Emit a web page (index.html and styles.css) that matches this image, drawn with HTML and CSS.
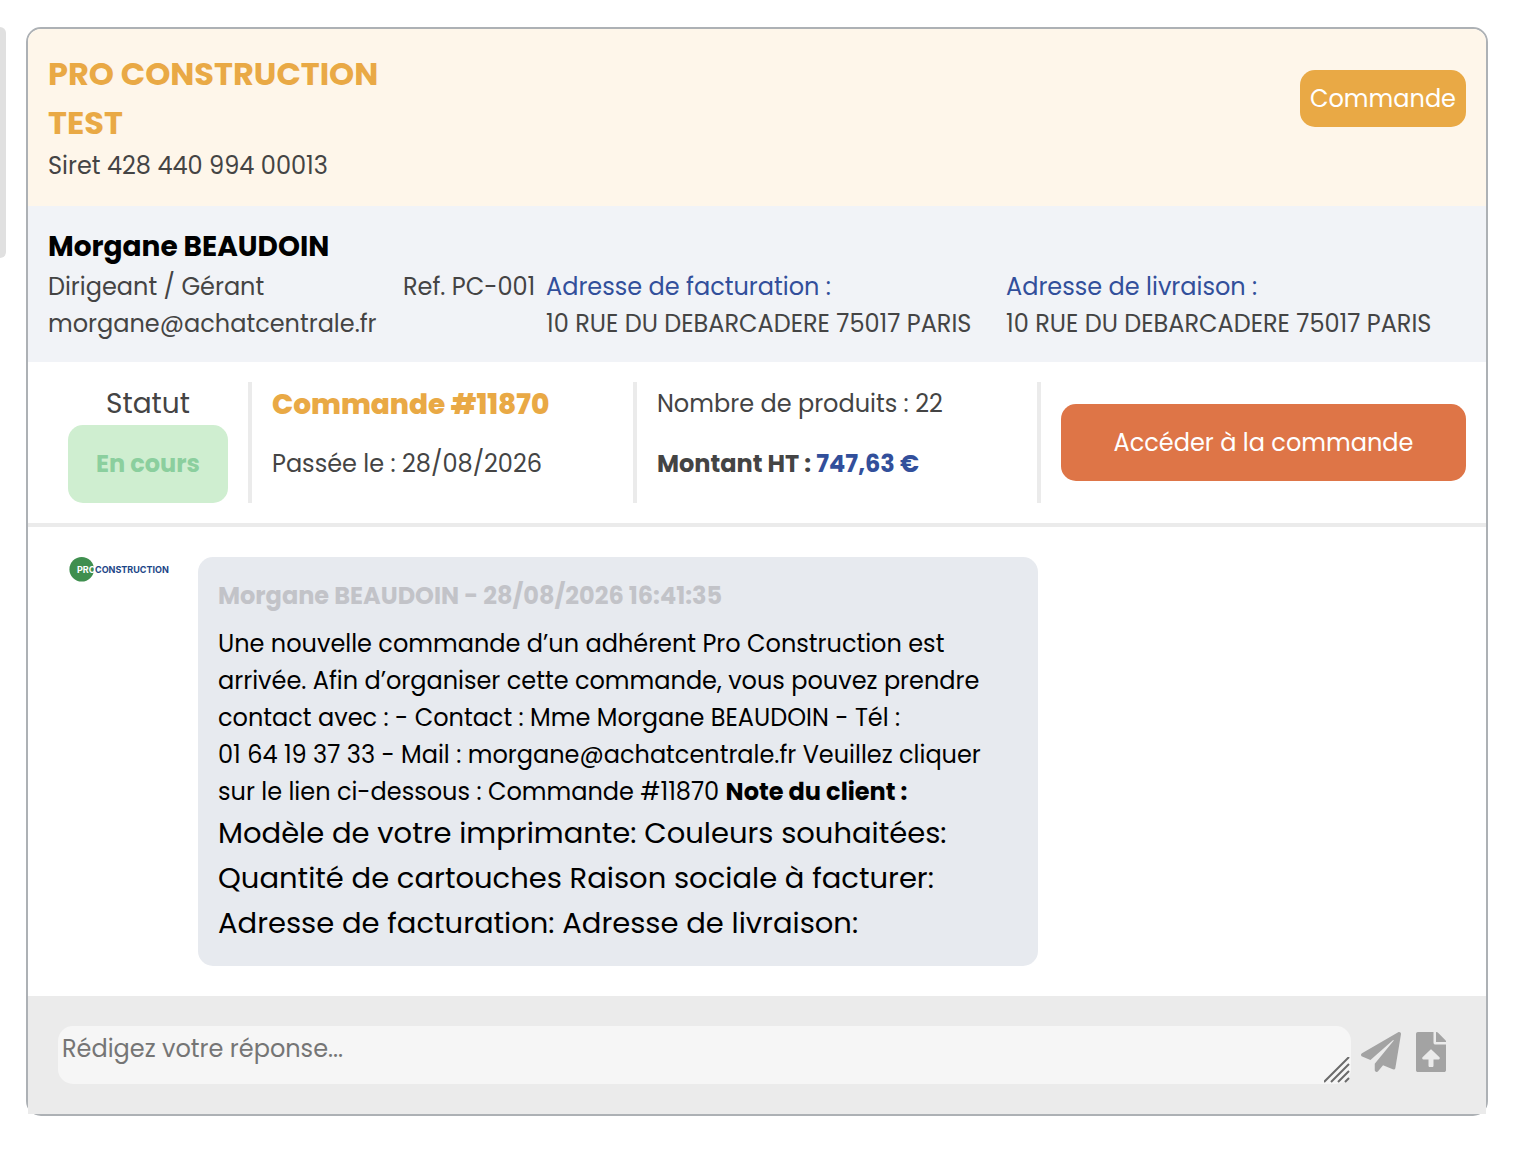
FILE: index.html
```
<!DOCTYPE html>
<html lang="fr">
<head>
  <meta charset="UTF-8">
  <meta name="viewport" content="width=device-width, initial-scale=1.0">
  <title>Commande #11870</title>
  <link rel="stylesheet" href="styles.css">
</head>
<body>

<aside class="sidebar"></aside>

<main class="conversation">

  <!-- Société -->
  <header class="company">
    <div>
      <h1>PRO CONSTRUCTION<br>TEST</h1>
      <p>Siret 428 440 994 00013</p>
    </div>
    <span class="badge">Commande</span>
  </header>

  <!-- Contact et adresses -->
  <section class="contact">
    <h2>Morgane BEAUDOIN</h2>
    <div class="contact-grid">
      <p>Dirigeant / Gérant<br>morgane@achatcentrale.fr</p>
      <p>Ref. PC-001</p>
      <p><span class="label">Adresse de facturation :</span><br>10 RUE DU DEBARCADERE 75017 PARIS</p>
      <p><span class="label">Adresse de livraison :</span><br>10 RUE DU DEBARCADERE 75017 PARIS</p>
    </div>
  </section>

  <!-- Résumé de la commande -->
  <section class="order">
    <div class="order-status">
      <p class="status-title">Statut</p>
      <p class="status">En cours</p>
    </div>
    <div class="order-cell">
      <h2 class="order-number">Commande #11870</h2>
      <p>Passée le : 28/08/2026</p>
    </div>
    <div class="order-cell">
      <p>Nombre de produits : 22</p>
      <p class="amount">Montant HT : <span>747,63 €</span></p>
    </div>
    <div class="order-cell order-action">
      <a href="#" class="order-btn">Accéder à la commande</a>
    </div>
  </section>

  <!-- Messages -->
  <section class="messages">
    <svg class="logo" viewBox="0 0 100 26" role="img" aria-label="Pro Construction">
      <circle cx="13.700" cy="12.200" r="12.300" fill="#3f8f4f"/>
      <text x="9" y="16" fill="#fff">PRO</text>
      <text x="27" y="16" fill="#1c4587">CONSTRUCTION</text>
    </svg>
    <article class="message">
      <h3>Morgane BEAUDOIN - 28/08/2026 16:41:35</h3>
      <p>
        Une nouvelle commande d’un adhérent Pro Construction est
        arrivée. Afin d’organiser cette commande, vous pouvez prendre
        contact avec : - Contact : Mme Morgane BEAUDOIN - Tél :<br>
        01 64 19 37 33 - Mail : morgane@achatcentrale.fr Veuillez cliquer<br>
        sur le lien ci-dessous : Commande #11870 <strong>Note du client :</strong>
      </p>
      <p class="note">
        Modèle de votre imprimante: Couleurs souhaitées:
        Quantité de cartouches Raison sociale à facturer:
        Adresse de facturation: Adresse de livraison:
      </p>
    </article>
  </section>

  <!-- Réponse -->
  <form class="reply">
    <div class="reply-field">
      <textarea rows="1" placeholder="Rédigez votre réponse..." aria-label="Rédigez votre réponse"></textarea>
      <svg class="grip" viewBox="0 0 26 26" fill="none" stroke="#6b6b6b" stroke-width="2">
        <path d="M0 25 25 0M7 25 25 7M14 25 25 14M21 25 25 21"/>
      </svg>
    </div>
    <div class="reply-actions">
      <button type="submit" class="icon-btn" aria-label="Envoyer">
        <svg width="40" height="40" viewBox="0 0 512 512" fill="#a3a3a3">
          <path d="M476 3.200 12.500 270.600c-18.100 10.400-15.800 35.600 2.200 43.200L121 358.400l287.300-253.200c5.500-4.900 13.300 2.600 8.600 8.300L176 407v80.500c0 23.600 28.500 32.900 42.500 15.800L282 426l124.600 52.200c14.200 6 30.400-2.900 33-18.200l72-432C515 7.800 493.300-6.800 476 3.200z"/>
        </svg>
      </button>
      <button type="button" class="icon-btn" aria-label="Joindre un fichier">
        <svg width="30" height="40" viewBox="0 0 384 512" fill="#a3a3a3">
          <path d="M224 136V0H24C10.700 0 0 10.700 0 24v464c0 13.300 10.700 24 24 24h336c13.300 0 24-10.700 24-24V160H248c-13.200 0-24-10.800-24-24zm65.200 216H224v80c0 8.800-7.200 16-16 16h-32c-8.800 0-16-7.200-16-16v-80H94.800c-14.300 0-21.400-17.300-11.300-27.400l96.400-95.700c6.700-6.600 17.400-6.600 24 0l96.400 95.700c10.200 10.100 3.100 27.400-11.100 27.400zM377 105 279.100 7c-4.500-4.500-10.600-7-17-7H256v128h128v-6.100c0-6.300-2.500-12.400-7-16.900z"/>
        </svg>
      </button>
    </div>
  </form>

</main>

</body>
</html>
```

FILE: styles.css
```
* {
  margin: 0;
  padding: 0;
  box-sizing: border-box;
}

body {
  font-family: 'Poppins', 'Inter', sans-serif;
  font-size: 24px;
  line-height: 37px;
  color: #444;
  background: #fff;
  display: flex;
  align-items: flex-start;
  gap: 20px;
  padding: 27px 40px 40px 0;
}

h1, h2, h3, strong {
  font-weight: 700;
}

.sidebar {
  flex: none;
  width: 6px;
  height: 231px;
  background: #e0e0e0;
  border-radius: 0 15px 15px 0;
}

.conversation {
  flex: 1;
  min-width: 0;
  border: 2px solid #adb1b5;
  border-radius: 15px;
}

.company {
  display: flex;
  justify-content: space-between;
  align-items: flex-start;
  padding: 20px 20px 22px;
  background: #fef6ea;
  border-radius: 13px 13px 0 0;
}

.company h1 {
  font-size: 32px;
  line-height: 49px;
  color: #e9a945;
}

.badge {
  margin-top: 21px;
  padding: 10px;
  background: #e9a945;
  color: #fff;
  border-radius: 15px;
}

.contact {
  padding: 20px;
  background: #f1f3f7;
}

.contact h2 {
  font-size: 28px;
  line-height: 42px;
  color: #000;
}

.contact-grid {
  display: grid;
  grid-template-columns: 355fr 143fr 460fr 460fr;
}

.contact-grid p {
  white-space: nowrap;
}

.label {
  color: #324f9b;
}

.order {
  display: grid;
  grid-template-columns: 200fr 385fr 404fr 429fr;
  padding: 20px;
  border-bottom: 4px solid #ebebeb;
}

.order-status {
  display: flex;
  flex-direction: column;
  padding: 0 20px;
  text-align: center;
}

.status-title {
  font-size: 28px;
  line-height: 43px;
}

.status {
  flex: 1;
  padding: 20px 0;
  background: #cfeed0;
  color: #8bcf9e;
  font-weight: 700;
  border-radius: 15px;
}

.order-cell {
  display: flex;
  flex-direction: column;
  gap: 15px;
  padding-left: 20px;
  border-left: 4px solid #ebebeb;
}

.order-cell > * {
  line-height: 45px;
}

.order-cell > p {
  line-height: 44px;
}

.order-number {
  font-size: 28px;
  font-weight: 800;
  color: #e9a945;
}

.order-cell + .order-cell {
  gap: 16px;
}

.amount {
  font-weight: 700;
}

.amount span {
  color: #324f9b;
}

.order-action {
  justify-content: center;
  padding-block: 22px;
}

.order-action .order-btn {
  padding: 20px;
  background: #de7547;
  color: #fff;
  line-height: 37px;
  text-align: center;
  text-decoration: none;
  border-radius: 15px;
}

.messages {
  display: flex;
  align-items: flex-start;
  gap: 30px;
  padding: 30px 18px 30px 40px;
}

.logo {
  flex: none;
  width: 100px;
  height: 26px;
  overflow: visible;
  font-family: 'Inter', sans-serif;
  font-size: 9px;
  font-weight: 700;
}

.message {
  flex: 0 0 60%;
  padding: 20px;
  background: #e7eaef;
  color: #000;
  border-radius: 15px;
}

.message h3 {
  margin-bottom: 11px;
  font-size: 24px;
  color: #c2c3c8;
}

.message .note {
  margin-top: 1px;
  font-size: 29px;
  line-height: 45px;
}

.reply {
  display: flex;
  align-items: flex-start;
  gap: 10px;
  padding: 30px 40px 30px 30px;
  background: #ebebeb;
}

.reply-field {
  position: relative;
  flex: 1;
  display: flex;
}

.reply textarea {
  width: 100%;
  height: 58px;
  padding: 4px;
  border: none;
  border-radius: 15px;
  background: #f6f6f6;
  color: #444;
  font: inherit;
  resize: none;
}

.reply textarea::placeholder {
  color: #757575;
}

.grip {
  position: absolute;
  right: 1px;
  bottom: 1px;
  width: 26px;
  height: 26px;
}

.reply-actions {
  display: flex;
  gap: 15px;
  padding-top: 6px;
}

.icon-btn {
  display: flex;
  border: none;
  background: none;
  cursor: pointer;
}
```
